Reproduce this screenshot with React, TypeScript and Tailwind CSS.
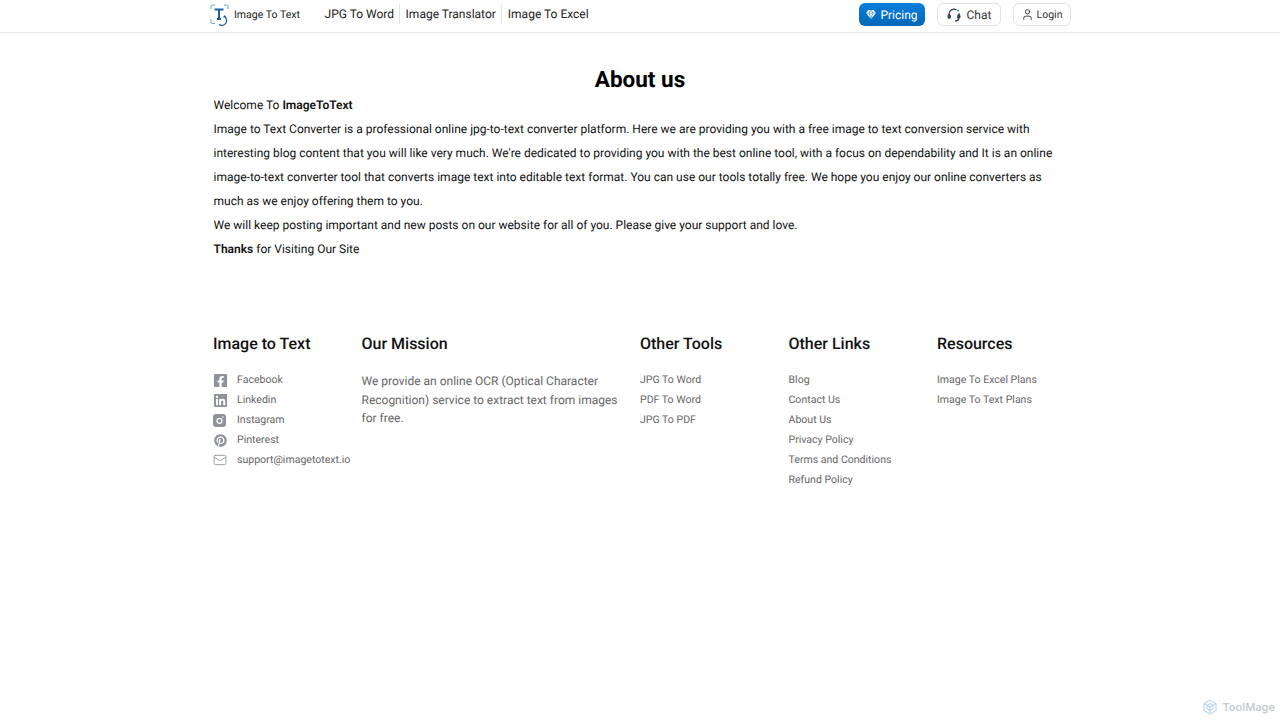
import { FaFacebookSquare, FaLinkedin, FaPinterest } from "react-icons/fa";
import { Mail, User } from "lucide-react";

function Insta() {
  return (
    <svg width="13" height="13" viewBox="0 0 13 13">
      <rect width="13" height="13" rx="3" fill="currentColor" />
      <circle cx="6.5" cy="6.8" r="2.5" fill="none" stroke="white" strokeWidth="1.2" />
      <circle cx="10" cy="3" r=".8" fill="white" />
    </svg>
  );
}

const socials = [
  { label: "Facebook", icon: <FaFacebookSquare className="w-[15px] h-[15px]" /> },
  { label: "Linkedin", icon: <FaLinkedin className="w-[15px] h-[15px]" /> },
  { label: "Instagram", icon: <Insta /> },
  { label: "Pinterest", icon: <FaPinterest className="w-[13px] h-[13px] ml-px" /> },
  { label: "support@imagetotext.io", icon: <Mail className="w-[14px] h-[14px]" strokeWidth={1.5} /> },
];

function Logo() {
  return (
    <svg width="20" height="22" viewBox="0 0 20 22" fill="none">
      <path d="M1 5V2.5A1.5 1.5 0 0 1 2.5 1H5M14 1h2.5A1.5 1.5 0 0 1 18 2.5V5M1 15v3a1.5 1.5 0 0 0 1.5 1.5H5" stroke="#5aa7dc" strokeWidth="1" />
      <path d="M4.5 5.5h9M9 5.5V15M7 15h4" stroke="#1c5f99" strokeWidth="2" />
      <path d="M14.5 12.5a4.5 4.5 0 0 1-5.5 8" stroke="#1c5f99" strokeWidth="1.3" />
      <path d="M13 13.5l1.5-2.5 1.8 2.2z" fill="#1c5f99" />
    </svg>
  );
}

function Gem() {
  return (
    <svg width="10" height="9" viewBox="0 0 11 10" fill="white">
      <path d="M2.5 0h6L11 3.2 5.5 10 0 3.2z" />
      <path d="M0 3.4h11M3.5 3.4l2 6 2-6M3.5 3.4 5.5 0l2 3.4" stroke="#0a78d1" strokeWidth=".6" fill="none" />
    </svg>
  );
}

function Headset() {
  return (
    <svg width="14" height="14" viewBox="0 0 14 14" fill="none" stroke="#374151" strokeWidth="1.3">
      <path d="M1.9 7.5V6.2a5.1 5.1 0 0 1 7.6-4.4" />
      <path d="M12.1 5.2V8" />
      <rect x="1.2" y="6.8" width="2" height="3.4" rx="1" fill="#374151" />
      <rect x="10.8" y="6.8" width="2" height="3.4" rx="1" fill="#374151" />
      <path d="M11.8 10.5c-.4 1.6-1.8 2.5-3.6 2.5" />
      <circle cx="11" cy="2.6" r="1" fill="#22a06b" stroke="none" />
    </svg>
  );
}

function ToolColumn({ title, links, className }: { title: string; links: string[]; className: string }) {
  return (
    <div className={className}>
      <h3 className="text-[16px] leading-[24px] font-medium text-[#111]">{title}</h3>
      <ul className="mt-[14px]">
        {links.map((l) => (
          <li key={l} className="h-5 text-[10.56px] leading-5 text-[#666]">{l}</li>
        ))}
      </ul>
    </div>
  );
}

export default function App() {
  return (
    <div className="relative h-[720px] overflow-hidden bg-white font-['Roboto',sans-serif] text-[#111] [text-rendering:geometricPrecision]">
      <header className="h-[33px] border-b border-[#e8e8e8] shadow-[0_1px_2px_rgba(0,0,0,0.03)]">
        <div className="w-[860px] mx-auto flex items-center h-[28px] relative">
          <div className="flex items-center mt-[1px]">
            <Logo />
            <span className="ml-[4px] text-[10.56px] text-[#222]">Image To Text</span>
          </div>
          <nav className="ml-[24.5px] flex items-center text-[12px] text-[#222]">
            <span className="pr-[5px] border-r border-[#e3e3e3] leading-[20px]">JPG To Word</span>
            <span className="px-[5.5px] border-r border-[#e3e3e3] leading-[20px]">Image Translator</span>
            <span className="pl-[5.5px] leading-[20px]">Image To Excel</span>
          </nav>
          <div className="ml-auto flex items-center -mr-[1px] mt-[1px]">
            <div className="h-[23px] w-[66px] rounded-md bg-gradient-to-b from-[#0a7ddb] to-[#0668b8] text-white text-[12px] flex items-center justify-center gap-[4px]">
              <Gem />
              Pricing
            </div>
            <div className="ml-3 h-[23px] w-[64px] rounded-md border border-[#e3e3e3] text-[#333] text-[12px] flex items-center justify-center gap-[6px]">
              <Headset />
              Chat
            </div>
            <div className="ml-3 h-[23px] w-[58px] rounded-md border border-[#e3e3e3] text-[#333] text-[10.56px] flex items-center justify-center gap-[2px]">
              <User className="w-[13px] h-[13px]" strokeWidth={1.7} />
              Login
            </div>
          </div>
        </div>
      </header>

      <main className="w-[860px] mx-auto pl-[3.5px]">
        <h1 className="mt-[30px] text-center text-[22.5px] leading-[34px] font-bold text-black pr-[3.5px]">About us</h1>
        <div className="-mt-[4px] text-[12px] leading-6 text-[#111] w-[845px]">
          <p>Welcome To <b className="font-semibold">ImageToText</b></p>
          <p>
            Image to Text Converter is a professional online jpg-to-text converter platform. Here we are providing you with a free image to text conversion service with interesting blog content that you will like very much. We're dedicated to providing you with the best online tool, with a focus on dependability and It is an online image-to-text converter tool that converts image text into editable text format. You can use our tools totally free. We hope you enjoy our online converters as much as we enjoy offering them to you.
          </p>
          <p>We will keep posting important and new posts on our website for all of you. Please give your support and love.</p>
          <p><b className="font-semibold">Thanks</b> for Visiting Our Site</p>
        </div>

        <footer className="mt-[71px] -ml-[0.5px] flex">
          <div className="w-[148.5px]">
            <h3 className="text-[16px] leading-[24px] font-medium text-[#111]">Image to Text</h3>
            <ul className="mt-[14px]">
              {socials.map((s) => (
                <li key={s.label} className="h-5 flex items-center text-[10.56px] text-[#666]">
                  <span className="w-[24px] text-[#8f9399] flex items-center">{s.icon}</span>
                  {s.label}
                </li>
              ))}
            </ul>
          </div>
          <div className="w-[278.5px]">
            <h3 className="text-[16px] leading-[24px] font-medium text-[#111]">Our Mission</h3>
            <p className="mt-[16px] w-[262px] text-[12px] leading-[18.5px] text-[#666]">
              We provide an online OCR (Optical Character Recognition) service to extract text from images for free.
            </p>
          </div>
          <ToolColumn className="w-[148.5px]" title="Other Tools" links={["JPG To Word", "PDF To Word", "JPG To PDF"]} />
          <ToolColumn className="w-[148.5px]" title="Other Links" links={["Blog", "Contact Us", "About Us", "Privacy Policy", "Terms and Conditions", "Refund Policy"]} />
          <ToolColumn className="w-[130px]" title="Resources" links={["Image To Excel Plans", "Image To Text Plans"]} />
        </footer>
      </main>

      {/* watermark */}
      <div className="absolute right-[5px] bottom-[5px] flex items-center gap-[4px] opacity-40 font-['Inter',sans-serif] text-[11px] font-semibold text-[#6f8190]">
        <svg width="16" height="16" viewBox="0 0 16 16" fill="none" stroke="#3f8fd0" strokeWidth="1">
          <path d="M8 1l6 3.5v7L8 15l-6-3.5v-7z" />
          <path d="M8 4.5l3 1.8v3.4L8 11.5 5 9.7V6.3z" />
          <path d="M2 4.5l6 3.5 6-3.5M8 8v7" />
        </svg>
        ToolMage
      </div>
    </div>
  );
}
